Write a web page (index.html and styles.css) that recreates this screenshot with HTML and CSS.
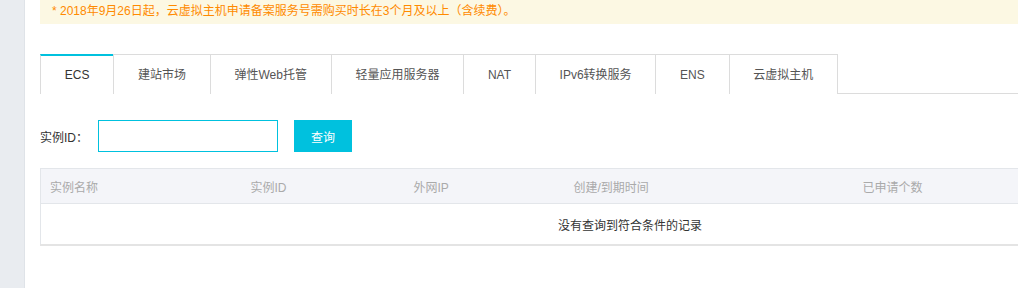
FILE: index.html
```html
<!DOCTYPE html>
<html lang="zh-CN">
<head>
  <meta charset="UTF-8" />
  <title>备案服务号</title>
  <link rel="stylesheet" href="styles.css">
</head>
<body>
  <div class="layout">
    <div class="sidebar"></div>
    <div class="main">
      <div class="notice">* 2018年9月26日起，云虚拟主机申请备案服务号需购买时长在3个月及以上（含续费）。</div>

      <ul class="tabs">
        <li class="tab active">ECS</li>
        <li class="tab">建站市场</li>
        <li class="tab">弹性Web托管</li>
        <li class="tab">轻量应用服务器</li>
        <li class="tab">NAT</li>
        <li class="tab">IPv6转换服务</li>
        <li class="tab">ENS</li>
        <li class="tab">云虚拟主机</li>
      </ul>

      <div class="search">
        <label for="instance-id">实例ID：</label>
        <input type="text" id="instance-id" />
        <button id="search-btn">查询</button>
      </div>

      <div class="table-wrap">
        <table class="records">
          <colgroup>
            <col class="c1"><col class="c2"><col class="c3"><col class="c4"><col>
          </colgroup>
          <thead>
            <tr>
              <th>实例名称</th>
              <th>实例ID</th>
              <th>外网IP</th>
              <th>创建/到期时间</th>
              <th>已申请个数</th>
            </tr>
          </thead>
          <tbody>
            <tr>
              <td colspan="5" class="empty">没有查询到符合条件的记录</td>
            </tr>
          </tbody>
        </table>
      </div>
    </div>
  </div>
</body>
</html>
```

FILE: styles.css
```css
html, body {
  margin: 0;
  height: 100%;
  overflow: hidden;
}
body {
  font-family: "Liberation Sans", "Noto Sans CJK SC", sans-serif;
  font-size: 12px;
  color: #333;
  background: #fff;
}
.layout {
  display: flex;
  height: 100%;
}
.sidebar {
  width: 24px;
  flex: none;
  background: #e9ecf0;
  border-right: 1px solid #dfe3e8;
}
.main {
  flex: 1;
  min-width: 0;
  padding-left: 15px;
  overflow: hidden;
}
.notice {
  height: 24px;
  line-height: 22px;
  padding-left: 12px;
  background: #fcf8e3;
  color: #ff8a00;
  white-space: nowrap;
}
.tabs {
  display: flex;
  list-style: none;
  margin: 30px 0 0;
  padding: 0;
  border-bottom: 1px solid #dcdcdc;
}
.tab {
  height: 40px;
  line-height: 40px;
  padding: 0 23.75px;
  border: 1px solid #dcdcdc;
  border-right: none;
  border-bottom: none;
  margin-bottom: -1px;
  box-sizing: border-box;
  color: #555;
  white-space: nowrap;
  background: #fff;
}
.tab:last-child {
  border-right: 1px solid #dcdcdc;
}
.tab.active {
  border-top: 2px solid #00c1de;
  line-height: 38px;
  color: #333;
}
.search {
  display: flex;
  align-items: center;
  margin-top: 26px;
}
.search label {
  width: 58px;
  color: #333;
}
#instance-id {
  width: 180px;
  height: 32px;
  box-sizing: border-box;
  border: 1px solid #00c1de;
  outline: none;
  padding: 0 8px;
  margin: 0;
}
#search-btn {
  margin-left: 16px;
  width: 58px;
  height: 32px;
  border: none;
  background: #00c1de;
  color: #fff;
  font-family: inherit;
  font-size: 12px;
  cursor: pointer;
}
.table-wrap {
  margin-top: 16px;
  overflow: hidden;
}
.records {
  width: 1180px;
  border-collapse: collapse;
  border: 1px solid #e3e6ea;
  border-bottom: 2px solid #e4e4e4;
  table-layout: fixed;
}
.records .c1 { width: 201px; }
.records .c2 { width: 163px; }
.records .c3 { width: 160px; }
.records .c4 { width: 289px; }
.records th {
  height: 34px;
  padding: 0 0 0 9px;
  background: #f4f5f9;
  color: #aaa;
  font-weight: normal;
  text-align: left;
  border-bottom: 1px solid #e3e6ea;
}
.records td {
  height: 40px;
  padding: 0;
}
.empty {
  text-align: center;
  color: #333;
}
```
